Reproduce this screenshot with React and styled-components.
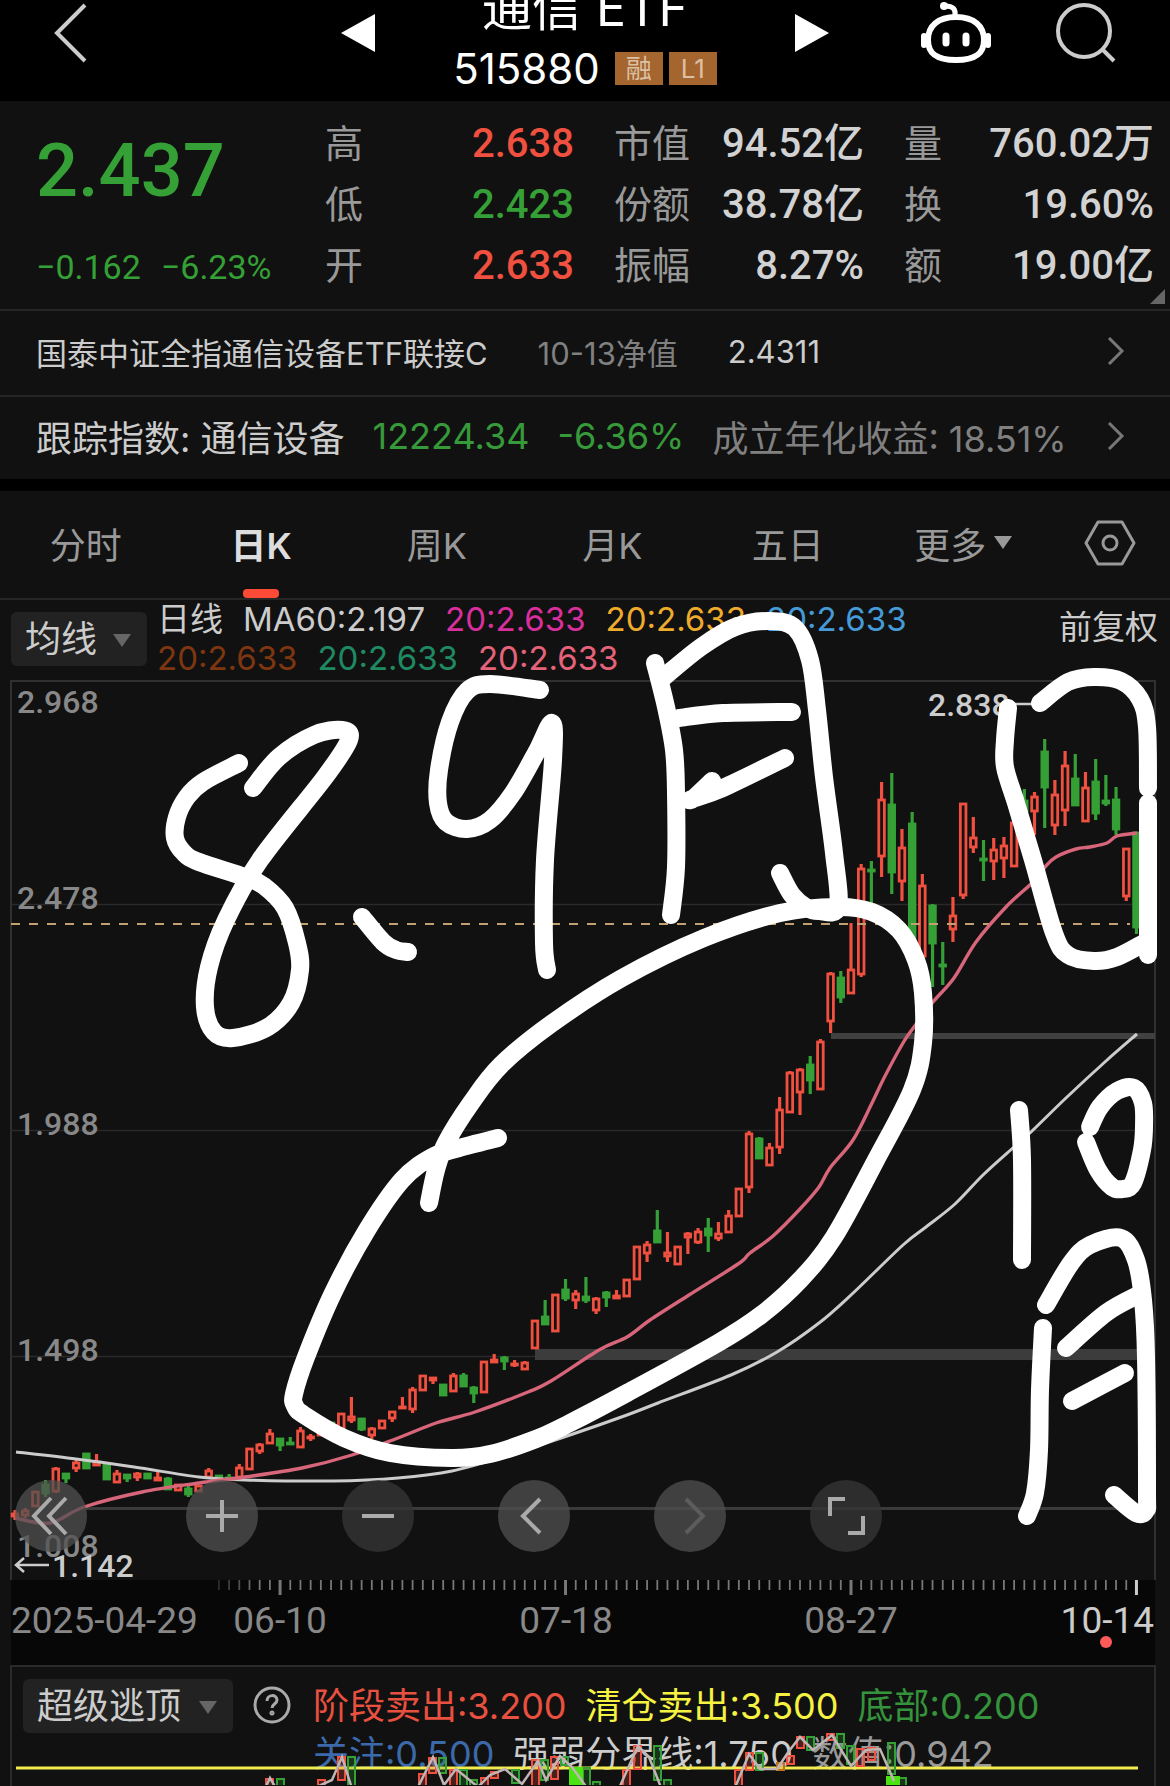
import React, { useState } from 'react'
import styled, { createGlobalStyle } from 'styled-components'

const RED = '#f0503f'
const GREEN = '#35a035'

// [kind, high, body top, body bottom, low] in chart units
const candles = [
  ['r', 1510, 1513, 1517, 1520], ['r', 1508, 1510, 1516, 1518], ['r', 1491, 1491, 1507, 1507],
  ['g', 1480, 1484, 1494, 1497], ['r', 1467, 1468, 1492, 1493], ['g', 1473, 1473, 1479, 1483],
  ['r', 1460, 1462, 1469, 1472], ['g', 1453, 1453, 1469, 1469], ['r', 1454, 1461, 1466, 1466],
  ['g', 1463, 1463, 1480, 1480], ['r', 1470, 1473, 1483, 1483], ['g', 1474, 1474, 1479, 1482],
  ['r', 1472, 1473, 1478, 1481], ['g', 1473, 1473, 1479, 1479], ['r', 1471, 1477, 1481, 1481],
  ['g', 1477, 1478, 1490, 1490], ['r', 1484, 1484, 1491, 1491], ['g', 1486, 1488, 1495, 1497],
  ['r', 1485, 1485, 1492, 1492], ['r', 1468, 1470, 1478, 1478], ['g', 1475, 1475, 1478, 1478],
  ['g', 1474, 1477, 1479, 1479], ['r', 1464, 1467, 1478, 1478], ['r', 1448, 1448, 1470, 1470],
  ['r', 1443, 1444, 1452, 1454], ['r', 1429, 1433, 1444, 1444], ['g', 1438, 1438, 1446, 1451],
  ['g', 1437, 1442, 1445, 1445], ['r', 1427, 1430, 1448, 1448], ['r', 1434, 1436, 1439, 1441],
  ['r', 1430, 1430, 1436, 1436], ['g', 1422, 1422, 1430, 1430], ['r', 1413, 1413, 1430, 1430],
  ['r', 1397, 1416, 1421, 1423], ['g', 1418, 1418, 1430, 1431], ['r', 1427, 1428, 1436, 1439],
  ['r', 1420, 1420, 1429, 1429], ['r', 1411, 1411, 1419, 1422], ['r', 1397, 1406, 1409, 1409],
  ['r', 1387, 1389, 1410, 1413], ['r', 1375, 1375, 1391, 1391], ['r', 1377, 1377, 1381, 1384],
  ['g', 1384, 1384, 1396, 1396], ['r', 1373, 1375, 1392, 1392], ['g', 1373, 1375, 1387, 1387],
  ['g', 1386, 1387, 1394, 1403], ['r', 1361, 1361, 1393, 1393], ['r', 1354, 1359, 1363, 1363],
  ['g', 1356, 1357, 1362, 1370], ['r', 1360, 1363, 1366, 1367], ['r', 1361, 1362, 1370, 1370],
  ['r', 1320, 1320, 1349, 1349], ['g', 1300, 1316, 1325, 1325], ['r', 1294, 1294, 1332, 1332],
  ['g', 1279, 1289, 1299, 1301], ['r', 1290, 1293, 1301, 1309], ['g', 1277, 1296, 1301, 1303],
  ['r', 1297, 1298, 1311, 1314], ['g', 1291, 1292, 1298, 1307], ['r', 1290, 1295, 1299, 1299],
  ['r', 1279, 1279, 1297, 1297], ['r', 1246, 1246, 1280, 1280], ['r', 1241, 1244, 1254, 1262],
  ['g', 1210, 1230, 1243, 1243], ['r', 1232, 1252, 1257, 1262], ['r', 1246, 1246, 1265, 1265],
  ['r', 1232, 1233, 1238, 1254], ['r', 1228, 1231, 1243, 1244], ['g', 1218, 1228, 1236, 1252],
  ['r', 1222, 1233, 1239, 1241], ['r', 1210, 1215, 1233, 1233], ['r', 1188, 1188, 1217, 1217],
  ['r', 1131, 1133, 1188, 1193], ['g', 1137, 1138, 1159, 1159], ['r', 1143, 1147, 1166, 1166],
  ['r', 1097, 1109, 1148, 1154], ['r', 1071, 1072, 1113, 1113], ['r', 1068, 1069, 1093, 1115],
  ['g', 1056, 1064, 1081, 1094], ['r', 1039, 1041, 1090, 1090], ['r', 972, 973, 1022, 1033],
  ['g', 971, 977, 998, 1003], ['r', 923, 969, 994, 994], ['r', 864, 868, 975, 977],
  ['g', 861, 869, 872, 903], ['r', 782, 799, 857, 877], ['g', 773, 804, 873, 894],
  ['r', 829, 847, 882, 901], ['g', 812, 823, 940, 940], ['r', 874, 885, 957, 957],
  ['g', 904, 905, 944, 987], ['g', 942, 964, 967, 985], ['r', 897, 915, 930, 942],
  ['r', 803, 803, 896, 899], ['r', 817, 837, 848, 853], ['g', 840, 858, 861, 881],
  ['r', 838, 849, 862, 880], ['r', 837, 845, 859, 878], ['r', 822, 822, 867, 867],
  ['g', 789, 800, 812, 820], ['r', 792, 796, 812, 835], ['g', 739, 751, 788, 828],
  ['r', 780, 794, 826, 835], ['r', 751, 765, 811, 826], ['g', 754, 778, 806, 806],
  ['r', 772, 787, 822, 822], ['g', 759, 781, 814, 820], ['g', 775, 800, 804, 806],
  ['g', 787, 799, 830, 835], ['r', 848, 848, 897, 901], ['g', 832, 832, 928, 934],
]

const ma60 = [
  [16, 1452], [76, 1459], [134, 1467], [199, 1477], [245, 1480], [333, 1481], [398, 1478], [452, 1471],
  [509, 1455], [570, 1435], [627, 1415], [658, 1403], [731, 1375], [777, 1352], [819, 1323], [851, 1295],
  [903, 1245], [926, 1227], [955, 1204], [983, 1175], [1014, 1147], [1031, 1132], [1067, 1097], [1106, 1061], [1137, 1034],
]

const ma20 = [
  [15, 1518], [50, 1523], [84, 1507], [142, 1492], [199, 1483], [245, 1477], [302, 1468], [352, 1455],
  [398, 1438], [436, 1423], [475, 1412], [528, 1392], [551, 1381], [599, 1350], [627, 1337], [650, 1320],
  [689, 1295], [738, 1264], [750, 1253], [773, 1236], [800, 1209], [819, 1187], [830, 1168], [853, 1140],
  [872, 1103], [884, 1078], [903, 1043], [914, 1027], [933, 1002], [954, 978], [976, 942], [1006, 907],
  [1033, 882], [1045, 867], [1056, 857], [1076, 849], [1090, 847], [1107, 843], [1117, 836], [1137, 833],
]

// freehand notes drawn on top of the chart
const strokes = [
  [[239, 763], [203, 782], [187, 797], [177, 817], [175, 838], [184, 853], [199, 862], [245, 877], [264, 886], [285, 908], [297, 943], [300, 970], [291, 1003], [268, 1027], [233, 1038], [214, 1032], [205, 1007], [209, 967], [226, 920], [260, 860], [325, 777], [349, 740], [342, 730], [314, 735], [279, 757], [253, 788]],
  [[362, 917], [383, 942], [396, 950], [408, 952]],
  [[540, 690], [490, 684], [467, 691], [450, 722], [439, 770], [438, 803], [446, 822], [467, 829], [490, 820], [513, 793], [536, 753], [552, 723], [553, 760], [545, 860], [544, 943], [547, 970]],
  [[655, 663], [666, 707], [674, 750], [676, 793], [676, 867], [671, 915]],
  [[664, 677], [701, 647], [735, 627], [769, 621], [795, 628], [810, 660], [817, 710], [824, 777], [834, 853], [838, 907], [819, 911], [807, 908], [792, 895], [780, 873]],
  [[679, 718], [723, 713], [792, 712]],
  [[712, 781], [694, 798], [692, 799], [723, 788], [785, 758]],
  [[429, 1203], [436, 1170], [446, 1143], [471, 1103], [501, 1065], [551, 1024], [622, 978], [704, 938], [780, 913], [838, 907], [872, 912], [899, 930], [916, 960], [923, 993], [923, 1043], [912, 1090], [876, 1160], [834, 1237], [800, 1280], [761, 1315], [718, 1343], [627, 1393], [570, 1423], [536, 1439], [490, 1454], [452, 1458], [390, 1453], [344, 1438], [304, 1415], [295, 1406], [294, 1394], [306, 1357], [333, 1293], [367, 1230], [402, 1180], [432, 1157], [459, 1148], [498, 1138]],
  [[1008, 708], [1005, 740], [1005, 767], [1016, 803], [1033, 860], [1054, 933], [1068, 955], [1094, 961], [1117, 957], [1144, 943]],
  [[1040, 703], [1068, 682], [1094, 677], [1121, 681], [1140, 699], [1147, 727], [1148, 788]],
  [[1148, 803], [1148, 955]],
  [[1019, 1110], [1022, 1160], [1022, 1260]],
  [[1090, 1127], [1100, 1107], [1117, 1091], [1134, 1088], [1143, 1103], [1144, 1127], [1142, 1150], [1133, 1183], [1123, 1189], [1112, 1187], [1098, 1170], [1086, 1142]],
  [[1046, 1305], [1071, 1263], [1090, 1245], [1121, 1238], [1136, 1260], [1143, 1300], [1146, 1357], [1147, 1490], [1146, 1510], [1136, 1513], [1114, 1495]],
  [[1043, 1328], [1040, 1390], [1039, 1450], [1035, 1493], [1027, 1516]],
  [[1066, 1348], [1106, 1313], [1138, 1295]],
  [[1072, 1401], [1106, 1383], [1125, 1373]],
]

// [color, x, top, bottom]
const oscBars = [
  [RED, 266, 1780, 1796], [GREEN, 277, 1780, 1796], [RED, 318, 1781, 1796], [RED, 338, 1758, 1781],
  [GREEN, 348, 1758, 1796], [RED, 419, 1775, 1796], [RED, 429, 1759, 1774], [GREEN, 439, 1759, 1774],
  [RED, 450, 1771, 1796], [GREEN, 460, 1771, 1796], [GREEN, 470, 1781, 1796], [RED, 481, 1779, 1796],
  [RED, 491, 1773, 1779], [GREEN, 512, 1771, 1784], [RED, 532, 1761, 1796], [GREEN, 541, 1761, 1781],
  [RED, 551, 1758, 1780], [GREEN, 561, 1758, 1766], [GREEN, 583, 1769, 1796], [GREEN, 593, 1783, 1796],
  [RED, 623, 1771, 1796], [RED, 634, 1747, 1770], [GREEN, 654, 1747, 1781], [GREEN, 664, 1781, 1796],
  [RED, 735, 1771, 1796], [RED, 746, 1754, 1771], [GREEN, 756, 1754, 1771], ['#c07018', 777, 1764, 1771],
  [RED, 787, 1757, 1765], [RED, 797, 1738, 1749], [GREEN, 807, 1738, 1751], [RED, 827, 1735, 1741],
  [GREEN, 837, 1735, 1749], [GREEN, 847, 1747, 1765], [RED, 857, 1750, 1767], [RED, 868, 1749, 1761],
  [GREEN, 888, 1744, 1775], [GREEN, 899, 1779, 1796],
]

const oscLine = [
  [[262, 1796], [270, 1779], [280, 1796]],
  [[312, 1790], [332, 1781], [342, 1758], [354, 1796]],
  [[414, 1796], [433, 1758], [444, 1786], [456, 1770], [478, 1788], [490, 1776], [505, 1770], [522, 1785], [538, 1762], [546, 1781], [560, 1757], [572, 1768], [592, 1796]],
  [[616, 1796], [638, 1747], [649, 1758], [664, 1796]],
  [[732, 1796], [749, 1755], [760, 1770], [777, 1770], [789, 1752], [800, 1738], [813, 1751], [832, 1736], [851, 1767], [866, 1751], [880, 1750], [894, 1782]],
]

const quotes = [
  { label: '高', value: '2.638', color: RED },
  { label: '市值', value: '94.52亿' },
  { label: '量', value: '760.02万' },
  { label: '低', value: '2.423', color: GREEN },
  { label: '份额', value: '38.78亿' },
  { label: '换', value: '19.60%' },
  { label: '开', value: '2.633', color: RED },
  { label: '振幅', value: '8.27%' },
  { label: '额', value: '19.00亿' },
]

const periods = ['分时', '日K', '周K', '月K', '五日']

const candleX = (i) => 15 + i * 10.195

// Catmull-Rom through the points, written as cubic beziers
function smooth(pts) {
  let d = `M${pts[0][0]} ${pts[0][1]}`
  for (let i = 0; i < pts.length - 1; i++) {
    const p0 = pts[i - 1] || pts[i]
    const p1 = pts[i]
    const p2 = pts[i + 1]
    const p3 = pts[i + 2] || p2
    d += `C${p1[0] + (p2[0] - p0[0]) / 6} ${p1[1] + (p2[1] - p0[1]) / 6} ${p2[0] - (p3[0] - p1[0]) / 6} ${p2[1] - (p3[1] - p1[1]) / 6} ${p2[0]} ${p2[1]}`
  }
  return d
}

const toPoints = (pts) => pts.map((p) => p.join(',')).join(' ')

export default function App() {
  const [period, setPeriod] = useState('日K')

  return <>
    <GlobalStyle />
    <Page>
      <Header>
        <HeaderSide>
          <IconButton aria-label="返回">
            <svg width="36" height="64" viewBox="0 0 36 64" fill="none" stroke="#ccc" strokeWidth="4"><path d="M32 4L4 32l28 28" /></svg>
          </IconButton>
        </HeaderSide>
        <IconButton aria-label="上一只">
          <svg width="34" height="38" viewBox="0 0 34 38" fill="#fff"><path d="M34 0v38L0 19z" /></svg>
        </IconButton>
        <TitleBlock>
          <Title>通信 ETF</Title>
          <CodeLine>
            <Code>515880</Code>
            <Badge>融</Badge>
            <Badge>L1</Badge>
          </CodeLine>
        </TitleBlock>
        <IconButton aria-label="下一只">
          <svg width="34" height="38" viewBox="0 0 34 38" fill="#fff"><path d="M0 0v38l34-19z" /></svg>
        </IconButton>
        <HeaderSide $end>
          <IconButton aria-label="智能助手">
            <svg width="70" height="64" viewBox="0 0 70 64" fill="none" stroke="#fff">
              <path strokeWidth="6" d="M35 16C53 16 63 25 63 39s-9 20-28 20S7 53 7 39s10-23 28-23z" />
              <path strokeWidth="5" d="M34 15c1-7-2-10-10-10" />
              <circle cx="23" cy="5" r="4" fill="#fff" stroke="none" />
              <path strokeWidth="6" strokeLinecap="round" d="M3 35v9M67 35v9" />
              <path strokeWidth="7" strokeLinecap="round" d="M25 35v7M45 35v7" />
            </svg>
          </IconButton>
          <IconButton aria-label="搜索">
            <svg width="62" height="62" viewBox="0 0 62 62" fill="none" stroke="#ccc" strokeWidth="4">
              <circle cx="29" cy="29" r="26" /><path d="M48 48l11 11" />
            </svg>
          </IconButton>
        </HeaderSide>
      </Header>

      <Quote>
        <PriceBlock>
          <Price>2.437</Price>
          <Change><span>−0.162</span><span>−6.23%</span></Change>
        </PriceBlock>
        <Stats>
          {quotes.map((q) => (
            <Stat key={q.label}>
              <StatLabel>{q.label}</StatLabel>
              <StatValue $color={q.color}>{q.value}</StatValue>
            </Stat>
          ))}
        </Stats>
        <Corner />
      </Quote>

      <InfoRow href="#fund" $size={31} $gap={50}>
        <Light>国泰中证全指通信设备ETF联接C</Light>
        <Dim>10-13净值</Dim>
        <Light>2.4311</Light>
        <Chevron />
      </InfoRow>
      <InfoRow href="#index" $size={36} $gap={28}>
        <Light>跟踪指数: 通信设备</Light>
        <Green>12224.34</Green>
        <Green>-6.36%</Green>
        <Dim>成立年化收益: 18.51%</Dim>
        <Chevron />
      </InfoRow>

      <Tabs>
        {periods.map((p) => (
          <Tab key={p} $active={p === period} onClick={() => setPeriod(p)}>{p}</Tab>
        ))}
        <Tab>更多<Triangle $color="#999" /></Tab>
        <Tab aria-label="设置">
          <svg width="52" height="46" viewBox="0 0 52 46" fill="none" stroke="#999" strokeWidth="3">
            <path d="M14 2h24l12 21-12 21H14L2 23z" strokeLinejoin="round" /><circle cx="26" cy="23" r="7" />
          </svg>
        </Tab>
      </Tabs>

      <Kline>
        <IndicatorBar>
          <SelectBox $width={136}>
            <Select aria-label="主图指标" defaultValue="均线"><option>均线</option></Select>
            <Triangle $color="#666" />
          </SelectBox>
          <Legend>
            <Item $color="#ccc">日线</Item>
            <Item $color="#ccc">MA60:2.197</Item>
            <Item $color="#d92f9c">20:2.633</Item>
            <Item $color="#efab2c">20:2.633</Item>
            <Item $color="#459bd8">20:2.633</Item>
            <Item $color="#7d360f">20:2.633</Item>
            <Item $color="#1f8a62">20:2.633</Item>
            <Item $color="#e4637a">20:2.633</Item>
          </Legend>
          <Adjust>前复权</Adjust>
        </IndicatorBar>

        <ChartSvg viewBox="0 680 1170 900">
          <path d="M11 1580V681H1155V1580" fill="none" stroke="#303030" strokeWidth="2" />
          <path d="M11 904.5H1155M11 1130.5H1155M11 1356.5H1155" stroke="#2a2a2a" strokeWidth="1.5" />
          <path d="M86 1508.5H1155" stroke="#3a3a3a" strokeWidth="3" />
          <AxisText x="17" y="713">2.968</AxisText>
          <AxisText x="17" y="909">2.478</AxisText>
          <AxisText x="17" y="1135">1.988</AxisText>
          <AxisText x="17" y="1361">1.498</AxisText>
          <AxisText x="17" y="1557">1.008</AxisText>
          <rect x="831" y="1033" width="324" height="6" fill="#404040" />
          <rect x="535" y="1349" width="602" height="11" fill="#3c3c3c" />
          {candles.map(([kind, high, top, bottom, low], i) => {
            const x = candleX(i)
            const color = kind === 'r' ? RED : GREEN
            return (
              <g key={i} stroke={color} strokeWidth="2.8">
                <path d={`M${x} ${high}V${top}M${x} ${bottom}V${low}`} strokeWidth="3.2" />
                <rect x={x - 2.8} y={top + 1} width="5.6" height={Math.max(bottom - top - 2, 1)} fill={kind === 'r' ? '#180f0f' : color} />
              </g>
            )
          })}
          <path d="M11 924H1130" stroke="#c3a070" strokeWidth="2" strokeDasharray="9 9" />
          <path d={smooth(ma60)} fill="none" stroke="#ccc" strokeWidth="3" />
          <path d={smooth(ma20)} fill="none" stroke="#d8667a" strokeWidth="3.4" />
          <path d="M1005 704H1042" stroke="#ccc" strokeWidth="2.5" />
          <AxisText x="928" y="716" $bright>2.838</AxisText>
          <path d="M49 1565H16M24 1558l-8 7 8 7" fill="none" stroke="#ccc" strokeWidth="2.5" />
          <AxisText x="52" y="1577" $bright>1.142</AxisText>
        </ChartSvg>

        <Toolbar>
          <RoundButton aria-label="最早"><svg width="40" height="40" viewBox="0 0 40 40"><path d="M20 2L3 20l17 18M35 2L18 20l17 18" /></svg></RoundButton>
          <RoundButton aria-label="放大"><svg width="40" height="40" viewBox="0 0 40 40"><path d="M20 4v32M4 20h32" /></svg></RoundButton>
          <RoundButton $dark aria-label="缩小"><svg width="40" height="40" viewBox="0 0 40 40"><path d="M4 20h32" /></svg></RoundButton>
          <RoundButton aria-label="左移"><svg width="40" height="40" viewBox="0 0 40 40"><path d="M26 3L9 20l17 17" /></svg></RoundButton>
          <RoundButton $faded aria-label="右移"><svg width="40" height="40" viewBox="0 0 40 40"><path d="M16 3l17 17-17 17" /></svg></RoundButton>
          <RoundButton $dark aria-label="全屏"><svg width="40" height="40" viewBox="0 0 40 40"><path d="M4 20V3h15M37 20v17H22" /></svg></RoundButton>
        </Toolbar>

        <Notes viewBox="0 600 1170 980">
          {strokes.map((s, i) => <path key={i} d={smooth(s)} />)}
        </Notes>
      </Kline>

      <Timeline>
        <svg viewBox="0 1580 1170 85" width="100%" display="block">
          {candles.map((_, i) => {
            if (i < 20) return null
            const major = i % 28 === 26
            return <path key={i} d={`M${candleX(i)} 1580v${major ? 15 : 10}`} stroke={i === 110 ? '#ccc' : '#777'} strokeWidth={major ? 3 : 1.8} opacity={Math.min(1, (i - 18) / 6)} />
          })}
          <DateText x="11" y="1633">2025-04-29</DateText>
          <DateText x="280" y="1633" textAnchor="middle">06-10</DateText>
          <DateText x="566" y="1633" textAnchor="middle">07-18</DateText>
          <DateText x="851" y="1633" textAnchor="middle">08-27</DateText>
          <DateText x="1154" y="1633" textAnchor="end" $bright>10-14</DateText>
          <circle cx="1106" cy="1642" r="6" fill="#ff5a5a" />
        </svg>
      </Timeline>

      <SubPanel>
        <SelectBox $width={210}>
          <Select aria-label="副图指标" defaultValue="超级逃顶"><option>超级逃顶</option></Select>
          <Triangle $color="#666" />
        </SelectBox>
        <IconButton aria-label="说明">
          <svg width="38" height="38" viewBox="0 0 38 38" fill="none" stroke="#aaa" strokeWidth="3">
            <circle cx="19" cy="19" r="17" />
            <path d="M14 15c0-7 10-7 10-1 0 4-5 4-5 8" /><circle cx="19" cy="27" r="1" />
          </svg>
        </IconButton>
        <SubLegend>
          <Item $color="#e8503f">阶段卖出:3.200</Item>
          <Item $color="#f5f242">清仓卖出:3.500</Item>
          <Item $color="#35933c">底部:0.200</Item>
          <Item $color="#3c69aa">关注:0.500</Item>
          <Item $color="#ccc">强弱分界线:1.750</Item>
          <Item $color="#999">数值:0.942</Item>
        </SubLegend>
        <Oscillator viewBox="0 1666 1170 120">
          <path d="M16 1769H1138" stroke="#f3ec50" strokeWidth="3" />
          {oscBars.map(([color, x, top, bottom], i) => (
            <rect key={i} x={x} y={top} width="7" height={bottom - top} fill={color} fillOpacity=".25" stroke={color} strokeWidth="2" />
          ))}
          <rect x="569" y="1768" width="14" height="20" fill="#4be312" />
          <rect x="886" y="1777" width="14" height="20" fill="#4be312" />
          {oscLine.map((l, i) => <polyline key={i} points={toPoints(l)} fill="none" stroke="#c0b4b4" strokeWidth="2.5" />)}
        </Oscillator>
      </SubPanel>
    </Page>
  </>
}

const Chevron = () => (
  <ChevronSvg width="18" height="28" viewBox="0 0 18 28"><path d="M2 1l13 13L2 27" /></ChevronSvg>
)

const GlobalStyle = createGlobalStyle`
  * { box-sizing: border-box; }
  body {
    margin: 0;
    background: #111;
    color: #ccc;
    font-family: Inter, "Noto Sans CJK SC", sans-serif;
  }
  button {
    border: none;
    background: none;
    padding: 0;
    color: inherit;
    font: inherit;
    cursor: pointer;
  }
`

const numeric = `font-family: Roboto, "Noto Sans CJK SC", sans-serif;`

const Page = styled.main`
  width: 100%;
  overflow: hidden;
`

const Header = styled.header`
  display: grid;
  grid-template-columns: 1fr auto 300px auto 1fr;
  grid-template-rows: 66px;
  column-gap: 60px;
  height: 101px;
  align-items: center;
  background: #000;
`

const HeaderSide = styled.div`
  display: flex;
  align-items: center;
  gap: 64px;
  justify-content: ${(p) => (p.$end ? 'flex-end' : 'flex-start')};
  padding: ${(p) => (p.$end ? '0 53px 0 0' : '0 0 0 53px')};
`

const IconButton = styled.button`
  display: flex;
`

const TitleBlock = styled.div`
  display: flex;
  flex-direction: column;
  align-items: center;
  justify-content: flex-end;
  height: 101px;
  align-self: start;
  padding-bottom: 11px;
  margin: 0 -20px;
`

const Title = styled.h1`
  flex: none;
  margin: 0 0 8px;
  font-size: 50px;
  line-height: 60px;
  font-weight: 400;
  color: #fff;
  white-space: nowrap;
`

const CodeLine = styled.div`
  display: flex;
  flex: none;
  align-items: center;
  gap: 6px;
  height: 44px;
`

const Code = styled.span`
  font-size: 42px;
  color: #fff;
  margin-right: 9px;
`

const Badge = styled.span`
  width: 48px;
  height: 33px;
  line-height: 33px;
  text-align: center;
  font-size: 26px;
  background: #a5652f;
  color: #dcc0a4;
`

const Quote = styled.section`
  position: relative;
  display: grid;
  grid-template-columns: 289px 1fr;
  height: 210px;
  padding: 12px 16px 14px 36px;
  border-bottom: 2px solid #262626;
`

const PriceBlock = styled.div`
  display: flex;
  flex-direction: column;
  gap: 8px;
  ${numeric}
  color: ${GREEN};
`

const Price = styled.strong`
  font-size: 74px;
  line-height: 116px;
  font-weight: 500;
`

const Change = styled.div`
  display: flex;
  gap: 20px;
  font-size: 34px;
  line-height: 60px;
`

const Stats = styled.div`
  display: grid;
  grid-template-columns: 249px 250px 1fr;
  column-gap: 40px;
  grid-auto-rows: 61px;
`

const Stat = styled.div`
  display: flex;
  justify-content: space-between;
  align-items: baseline;
  line-height: 61px;
  white-space: nowrap;
`

const StatLabel = styled.span`
  font-size: 38px;
  color: #999;
`

const StatValue = styled.span`
  ${numeric}
  font-size: 40px;
  font-weight: 500;
  color: ${(p) => p.$color || '#d2d2d2'};
`

const Corner = styled.i`
  position: absolute;
  right: 5px;
  bottom: 5px;
  border-left: 15px solid transparent;
  border-bottom: 15px solid #666;
`

const InfoRow = styled.a`
  display: flex;
  align-items: center;
  gap: ${(p) => p.$gap}px;
  height: 84px;
  padding: 0 45px 4px 36px;
  font-size: ${(p) => p.$size}px;
  text-decoration: none;
  white-space: nowrap;
  & + & {
    border-top: 2px solid #262626;
  }
`

const Light = styled.span`
  color: #ccc;
`

const Dim = styled.span`
  color: #808080;
`

const Green = styled.span`
  color: #369a3a;
`

const ChevronSvg = styled.svg`
  margin-left: auto;
  fill: none;
  stroke: #777;
  stroke-width: 3;
`

const Tabs = styled.nav`
  display: grid;
  grid-template-columns: repeat(6, 3fr) 2fr;
  height: 121px;
  border-top: 12px solid #000;
  border-bottom: 2px solid #262626;
`

const Tab = styled.button`
  position: relative;
  display: flex;
  align-items: center;
  justify-content: center;
  gap: 8px;
  padding: 0 4px 4px 0;
  font-size: 36px;
  color: ${(p) => (p.$active ? '#ddd' : '#999')};
  font-weight: ${(p) => (p.$active ? 600 : 400)};
  &::after {
    content: "";
    display: ${(p) => (p.$active ? 'block' : 'none')};
    position: absolute;
    bottom: 0;
    width: 36px;
    height: 9px;
    border-radius: 4px;
    background: #fb4a36;
  }
`

const Triangle = styled.i`
  flex: none;
  border: 9px solid transparent;
  border-top: 13px solid ${(p) => p.$color};
  border-bottom: 0;
  pointer-events: none;
`

const Kline = styled.section`
  position: relative;
`

const IndicatorBar = styled.div`
  display: flex;
  align-items: flex-start;
  gap: 10px;
  height: 80px;
  padding: 0 12px 0 11px;
`

const SelectBox = styled.div`
  position: relative;
  flex: none;
  width: ${(p) => p.$width}px;
  height: 54px;
  margin-top: 12px;
  ${Triangle} {
    position: absolute;
    right: 16px;
    top: 22px;
  }
`

const Select = styled.select`
  appearance: none;
  width: 100%;
  height: 100%;
  padding: 0 0 0 14px;
  border: none;
  border-radius: 6px;
  background: #222;
  color: #ccc;
  font: inherit;
  font-size: 36px;
`

const Legend = styled.div`
  display: flex;
  flex-wrap: wrap;
  column-gap: 20px;
  flex: 1;
  max-width: 790px;
  font-size: 33px;
  line-height: 39px;
`

const Item = styled.span`
  color: ${(p) => p.$color};
  white-space: nowrap;
`

const Adjust = styled.span`
  margin-left: auto;
  font-size: 33px;
  line-height: 54px;
`

const ChartSvg = styled.svg`
  display: block;
  width: 100%;
`

const AxisText = styled.text`
  ${numeric}
  font-size: 32px;
  font-weight: 500;
  fill: ${(p) => (p.$bright ? '#ccc' : '#888')};
`

const DateText = styled.text`
  ${numeric}
  font-size: 37px;
  fill: ${(p) => (p.$bright ? '#ccc' : '#888')};
`

const Toolbar = styled.div`
  position: absolute;
  left: 15px;
  bottom: 28px;
  display: flex;
  gap: 84px;
  button:first-child {
    margin-right: 15px;
  }
`

const RoundButton = styled.button`
  display: flex;
  align-items: center;
  justify-content: center;
  width: 72px;
  height: 72px;
  border-radius: 50%;
  background: ${(p) => (p.$dark ? 'rgba(52, 52, 52, .8)' : 'rgba(80, 80, 80, .75)')};
  svg {
    fill: none;
    stroke: ${(p) => (p.$faded ? '#5c5c5c' : '#aaa')};
    stroke-width: 4;
  }
`

const Notes = styled.svg`
  position: absolute;
  left: 0;
  top: 0;
  width: 100%;
  overflow: visible;
  pointer-events: none;
  fill: none;
  stroke: #fff;
  stroke-width: 18;
  stroke-linecap: round;
  stroke-linejoin: round;
`

const Timeline = styled.div`
  background: linear-gradient(90deg, #111 11px, #070707 11px, #070707 calc(100% - 15px), #111 calc(100% - 15px));
`

const SubPanel = styled.section`
  position: relative;
  display: flex;
  align-items: flex-start;
  height: 121px;
  margin: 0 14px 0 10px;
  padding-left: 11px;
  border: 2px solid #2a2a2a;
  border-bottom: 0;
  ${IconButton} {
    margin: 19px 20px 0;
  }
`

const SubLegend = styled.div`
  display: flex;
  flex-wrap: wrap;
  column-gap: 19px;
  flex: 1;
  padding-top: 15px;
  margin-left: 2px;
  font-size: 36px;
  line-height: 48px;
`

const Oscillator = styled.svg`
  position: absolute;
  left: -12px;
  top: -2px;
  width: calc(100% + 28px);
  pointer-events: none;
`
